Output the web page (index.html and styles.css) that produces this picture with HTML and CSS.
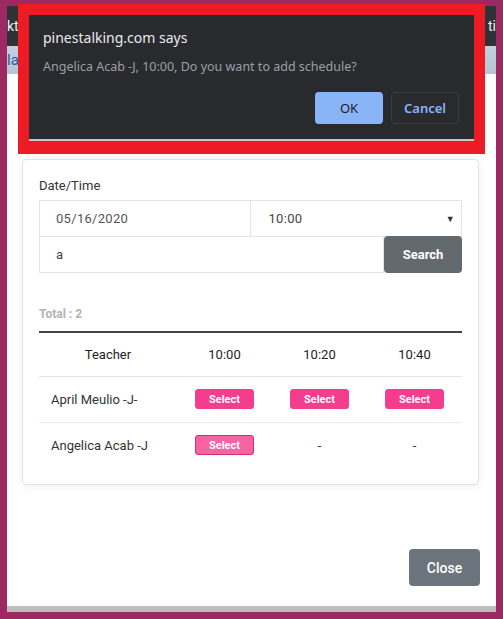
FILE: index.html
```html
<!DOCTYPE html>
<html lang="en">
<head>
<meta charset="utf-8">
<title>Schedule</title>
<link rel="stylesheet" href="styles.css">
</head>
<body>
<div class="frame">
  <div class="topbar"><span class="nav-l">kt</span><span class="nav-r">ti</span></div>
  <div class="subbar"><span class="crumb">la</span></div>
  <div class="modal">
    <div class="card">
      <div class="lbl">Date/Time</div>
      <div class="dt-row">
        <div class="field half">05/16/2020</div>
        <div class="field half sel">10:00<span class="caret">&#9660;</span></div>
      </div>
      <div class="search-row">
        <div class="field grow">a</div>
        <button class="btn-search">Search</button>
      </div>
      <div class="total">Total : 2</div>
      <table class="grid">
        <thead>
          <tr><th class="c-teacher">Teacher</th><th>10:00</th><th>10:20</th><th>10:40</th></tr>
        </thead>
        <tbody>
          <tr>
            <td class="name">April Meulio -J-</td>
            <td><button class="btn-sel">Select</button></td>
            <td><button class="btn-sel">Select</button></td>
            <td><button class="btn-sel">Select</button></td>
          </tr>
          <tr class="last">
            <td class="name">Angelica Acab -J</td>
            <td><button class="btn-sel active">Select</button></td>
            <td>-</td>
            <td>-</td>
          </tr>
        </tbody>
      </table>
    </div>
    <div class="footer"><button class="btn-close">Close</button></div>
  </div>
  <div class="band"></div>
</div>
<div class="alert-wrap">
  <div class="alert">
    <div class="a-title">pinestalking.com says</div>
    <div class="a-msg">Angelica Acab -J, 10:00, Do you want to add schedule?</div>
    <div class="a-btns">
      <button class="a-ok">OK</button>
      <button class="a-cancel">Cancel</button>
    </div>
  </div>
</div>
</body>
</html>
```

FILE: styles.css
```css
* { box-sizing: border-box; }
html, body { margin: 0; padding: 0; }
body {
  width: 503px;
  height: 619px;
  background: #9d2962;
  font-family: Roboto, "Liberation Sans", sans-serif;
  position: relative;
  overflow: hidden;
}
.frame {
  margin: 6px 7px 7px 7px;
  height: 606px;
  display: flex;
  flex-direction: column;
  overflow: hidden;
}
.topbar {
  height: 40px;
  background: #2f3135;
  display: flex;
  justify-content: space-between;
  align-items: center;
  color: #f2f2f2;
  font-size: 14px;
  white-space: nowrap;
  overflow: hidden;
  flex-shrink: 0;
}
.subbar {
  height: 28px;
  background: linear-gradient(#c3d1de, #b5c5d5);
  display: flex;
  align-items: center;
  color: #2c5d9c;
  font-size: 15px;
  white-space: nowrap;
  overflow: hidden;
  flex-shrink: 0;
}
.modal {
  flex: 1;
  background: #fff;
  display: flex;
  flex-direction: column;
  padding: 85px 17px 20px 15px;
}
.band {
  height: 6px;
  background: #bdbdbd;
  flex-shrink: 0;
}
.card {
  border: 1px solid #e2e2e2;
  border-radius: 4px;
  box-shadow: 0 2px 8px rgba(0,0,0,0.06);
  padding: 16px 16px 16px 16px;
}
.lbl {
  font-size: 13px;
  font-weight: 400;
  color: #333;
  line-height: 19px;
  margin-bottom: 5px;
}
.dt-row { display: flex; height: 37px; }
.field {
  border: 1px solid #e4e4e4;
  display: flex;
  align-items: center;
  padding-left: 16px;
  font-size: 13px;
  color: #555;
  letter-spacing: 0.3px;
}
.half { flex: 0 0 50%; }
.half + .half { border-left: none; padding-left: 18px; }
.sel { justify-content: space-between; padding-right: 6px; color: #444; }
.caret { font-size: 9px; color: #333; }
.search-row { display: flex; height: 36px; }
.grow { flex: 1; border-top: none; color: #444; }
.btn-search {
  width: 78px;
  border: none;
  border-radius: 4px;
  background: #62696f;
  color: #fff;
  font-family: Roboto, sans-serif;
  font-size: 13px;
  font-weight: 700;
  margin-top: -1px;
}
.total {
  margin-top: 33px;
  font-size: 12px;
  font-weight: 700;
  color: #b3b3b3;
  line-height: 17px;
  margin-bottom: 8px;
}
.grid {
  width: 100%;
  border-collapse: collapse;
  border-top: 2px solid #454545;
  table-layout: fixed;
}
.grid th {
  height: 44px;
  font-size: 13px;
  font-weight: 400;
  color: #222;
  border-bottom: 1px solid #e6e6e6;
  text-align: center;
}
.grid th.c-teacher { width: 138px; }
.grid td {
  height: 46px;
  font-size: 13px;
  color: #333;
  text-align: center;
}
.grid tr.last td { height: 46px; padding-top: 1px; }
.grid tbody tr:first-child td { border-bottom: 1px solid #ececec; }
.grid td.name { text-align: left; padding-left: 12px; }
.btn-sel {
  width: 59px;
  height: 20px;
  border: 1px solid #f43d8c;
  border-radius: 3px;
  background: #f43d8c;
  color: #fff;
  font-family: Roboto, sans-serif;
  font-size: 11px;
  font-weight: 700;
  padding: 0;
}
.btn-sel.active {
  background: #f763a1;
  border-color: #d42d76;
}
.footer {
  margin-top: auto;
  display: flex;
  justify-content: flex-end;
}
.btn-close {
  width: 71px;
  height: 37px;
  border: none;
  border-radius: 4px;
  background: #6c757d;
  color: #fff;
  font-family: Roboto, sans-serif;
  font-size: 14px;
  font-weight: 500;
  margin-right: -1px;
}
.alert-wrap {
  position: absolute;
  left: 18px;
  top: 4px;
  width: 467px;
  height: 150px;
  background: #ed1c24;
  padding: 11px 11px 13px 11px;
}
.alert {
  height: 100%;
  background: #292a2d;
  border-bottom: 2px solid #cfc4c5;
  padding: 13px 15px 0 14px;
  font-family: "Noto Sans", "Open Sans", sans-serif;
  display: flex;
  flex-direction: column;
}
.a-title {
  font-size: 14px;
  color: #e8eaed;
  line-height: 20px;
}
.a-msg {
  margin-top: 10px;
  font-size: 12.5px;
  color: #9aa0a6;
  line-height: 18px;
}
.a-btns {
  margin-top: 16px;
  display: flex;
  justify-content: flex-end;
  gap: 8px;
}
.a-ok, .a-cancel {
  width: 68px;
  height: 32px;
  border-radius: 4px;
  font-family: "Noto Sans", "Open Sans", sans-serif;
  font-size: 13px;
}
.a-ok {
  background: #8ab4f8;
  border: none;
  color: #202124;
}
.a-cancel {
  background: transparent;
  border: 1px solid #3c3d40;
  color: #8ab4f8;
  font-weight: 600;
}
```
